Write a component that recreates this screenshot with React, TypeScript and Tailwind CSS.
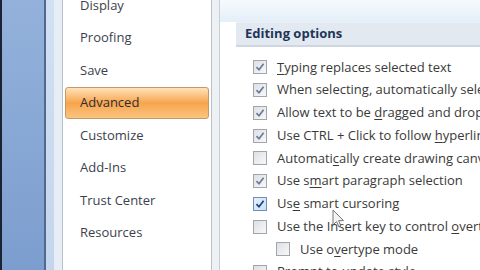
import type { ReactNode } from "react";

const FONT = { fontFamily: '"Open Sans", "Noto Sans", sans-serif' };

const navItems = [
	"Display",
	"Proofing",
	"Save",
	"Advanced",
	"Customize",
	"Add-Ins",
	"Trust Center",
	"Resources",
];

// Access key letters are underlined like in the Office dialog
function Key({ children }: { children: ReactNode }) {
	return <span className="underline underline-offset-2">{children}</span>;
}

type Option = {
	label: ReactNode;
	checked: boolean;
	indent?: boolean;
	hover?: boolean;
};

const options: Option[] = [
	{ label: <><Key>T</Key>yping replaces selected text</>, checked: true },
	{ label: "When selecting, automatically select entire word", checked: true },
	{ label: <>Allow text to be <Key>d</Key>ragged and dropped</>, checked: true },
	{ label: <>Use CTRL + Click to follow <Key>h</Key>yperlink</>, checked: true },
	{ label: <>Automati<Key>c</Key>ally create drawing canvas when inserting AutoShapes</>, checked: false },
	{ label: <>Use s<Key>m</Key>art paragraph selection</>, checked: true },
	{ label: <>Us<Key>e</Key> smart cursoring</>, checked: true, hover: true },
	{ label: <>Use the Insert key to control <Key>o</Key>vertype mode</>, checked: false },
	{ label: <>Use o<Key>v</Key>ertype mode</>, checked: false, indent: true },
	{ label: <>Prompt to update st<Key>y</Key>le</>, checked: false },
];

function CheckBox({ checked, hover }: { checked: boolean; hover?: boolean }) {
	return (
		<div
			className={
				hover
					? "w-[14px] h-[14px] shrink-0 border border-[#6f8fb8] bg-gradient-to-br from-[#e3f0fb] to-[#cbe1f6] flex items-center justify-center"
					: "w-[14px] h-[14px] shrink-0 border border-[#a2a6ab] bg-gradient-to-br from-[#dde0e4] to-[#f7f8f9] flex items-center justify-center"
			}
		>
			{checked && (
				<svg width="10" height="10" viewBox="0 0 10 10">
					<path
						d="M1.5 5.2 L4 7.8 L8.6 1.8"
						fill="none"
						stroke={hover ? "#1f3f7a" : "#6a7a98"}
						strokeWidth="1.7"
					/>
				</svg>
			)}
		</div>
	);
}

export default function App() {
	return (
		<div
			className="relative w-[480px] h-[270px] flex overflow-hidden bg-white text-[13px]"
			style={FONT}
		>
			{/* Office window frame on the left */}
			<div className="w-[2px] shrink-0 bg-[#1b2232]" />
			<div className="w-[42px] shrink-0 bg-gradient-to-b from-[#93b1da] to-[#7c9ecf]" />
			<div className="w-[2px] shrink-0 bg-[#52688c]" />
			<div className="w-[8px] shrink-0 bg-gradient-to-b from-[#d2e1f2] to-[#c4d6ec]" />
			<div className="w-[8px] shrink-0 bg-[#e7edf5]" />

			{/* Options category list */}
			<div className="w-[150px] shrink-0 border-l border-r border-[#b7c0cb] bg-white">
				<div className="-mt-[11px] flex flex-col px-[2px]">
					{navItems.map((item) =>
						item === "Advanced" ? (
							<div
								key={item}
								className="h-[32.5px] shrink-0 flex items-center pl-[14px] rounded-[3px] border border-[#c49a62] bg-gradient-to-b from-[#fde2b8] via-[#f7a44a] to-[#f9c581] text-[#2d2d35]"
							>
								{item}
							</div>
						) : (
							<div
								key={item}
								className="h-[32.5px] shrink-0 flex items-center pl-[15px] text-[#3c3f4e]"
							>
								{item}
							</div>
						),
					)}
				</div>
			</div>

			<div className="w-[8px] shrink-0 bg-[#eef1f4] border-r border-[#c9cfd6]" />

			{/* Advanced page */}
			<div className="flex-1 min-w-0 flex flex-col">
				<div className="h-[22px] shrink-0 bg-gradient-to-b from-[#f6fafd] to-[#e4eff9]" />
				<div className="shrink-0 ml-[16px] h-[25px] flex items-center pl-[9px] bg-[#e3e9f1] border-t border-[#edf1f6] border-b-2 border-b-[#cdd6e1] font-bold text-[#1f3658] whitespace-nowrap">
					Editing options
				</div>
				<div className="shrink-0 mt-[9px] flex flex-col">
					{options.map((opt, i) => (
						<div
							key={i}
							className={
								opt.indent
									? "shrink-0 h-[22.75px] flex items-center gap-[10px] pl-[56px] whitespace-nowrap text-[#3a3a3a]"
									: "shrink-0 h-[22.75px] flex items-center gap-[10px] pl-[33px] whitespace-nowrap text-[#3a3a3a]"
							}
						>
							<CheckBox checked={opt.checked} hover={opt.hover} />
							<span>{opt.label}</span>
						</div>
					))}
				</div>
			</div>

			{/* Mouse pointer */}
			<svg
				className="absolute left-[332px] top-[209px]"
				width="14"
				height="20"
				viewBox="0 0 14 20"
			>
				<path
					d="M1 1 L1 16 L4.5 12.5 L7 18 L9 17 L6.6 11.6 L11.5 11.6 Z"
					fill="#f2f2f2"
					stroke="#555"
					strokeWidth="1"
					opacity="0.8"
				/>
			</svg>
		</div>
	);
}
